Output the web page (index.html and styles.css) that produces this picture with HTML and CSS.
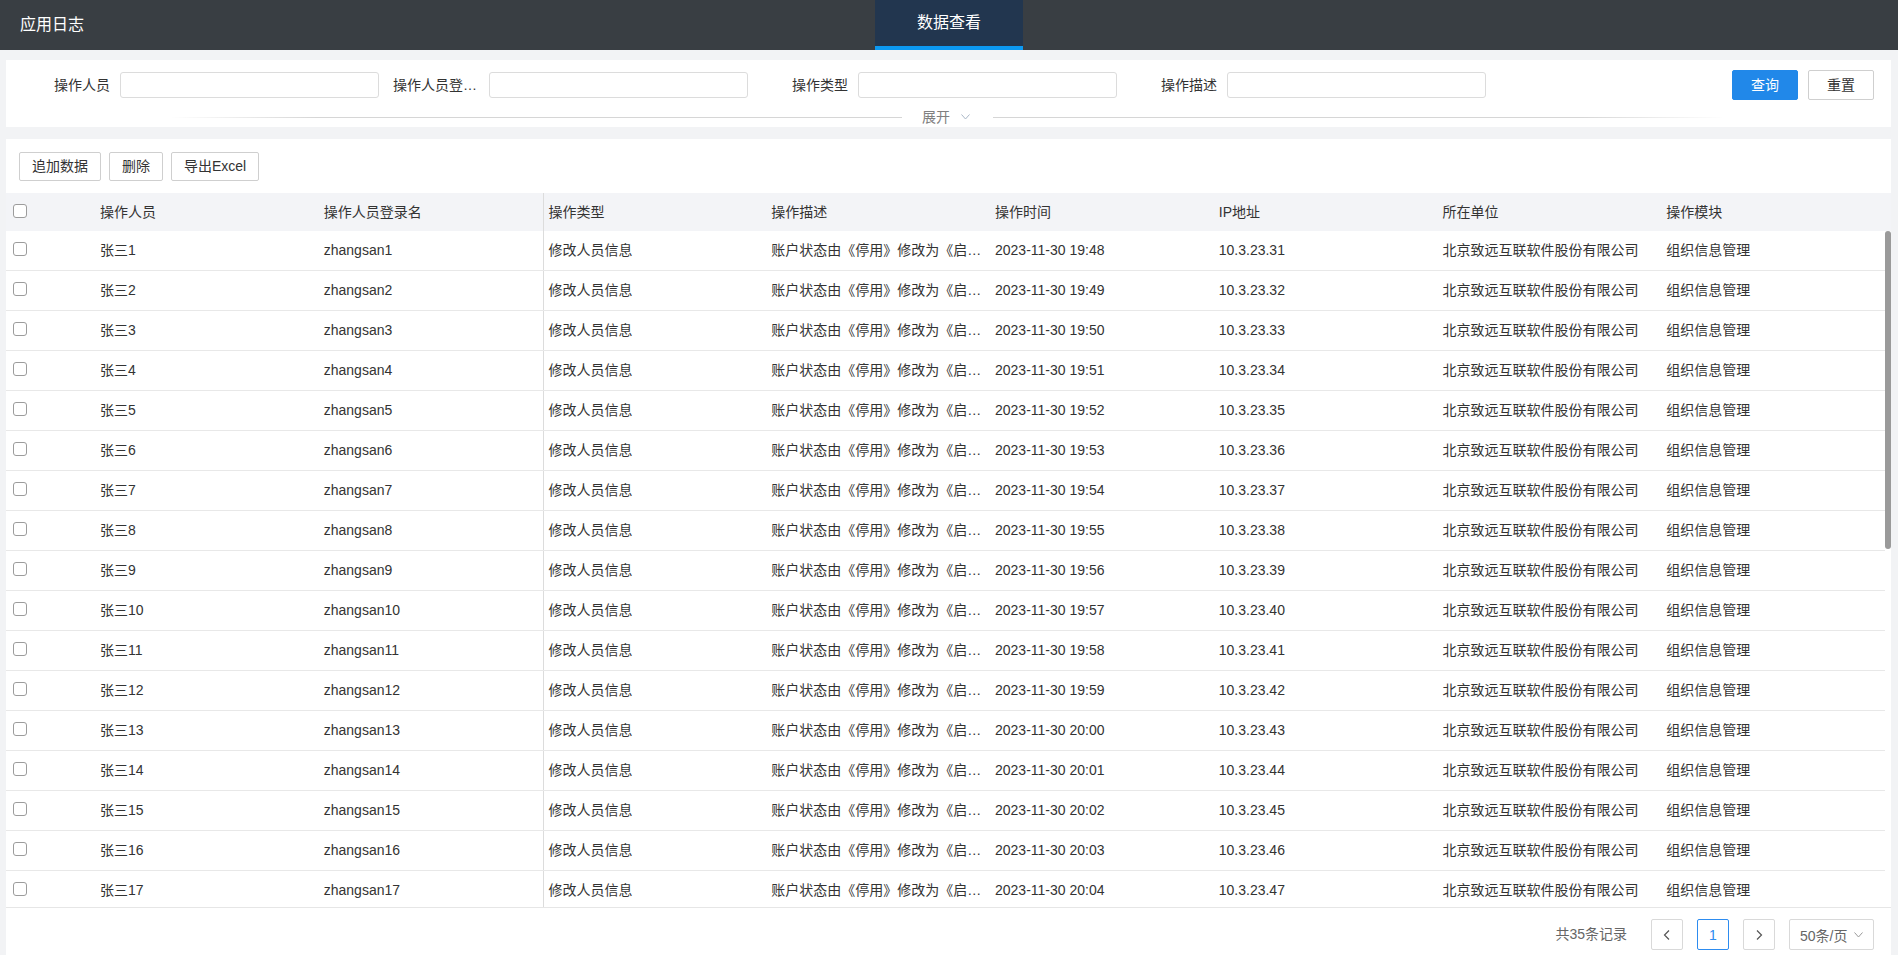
FILE: index.html
```html
<!DOCTYPE html>
<html lang="zh-CN">
<head>
    <meta charset="UTF-8">
    <meta name="viewport" content="width=device-width, initial-scale=1.0">
    <title>应用日志</title>
    <link rel="stylesheet" href="styles.css">
</head>
<body>
    <div class="topbar">
        <div class="app-title">应用日志</div>
        <div class="tab active">数据查看</div>
        <div></div>
    </div>

    <div class="page">
        <div class="search-panel">
            <div class="search-row">
                <div class="field">
                    <label class="field-label">操作人员</label>
                    <input class="field-input" type="text">
                </div>
                <div class="field">
                    <label class="field-label">操作人员登录名</label>
                    <input class="field-input" type="text">
                </div>
                <div class="field">
                    <label class="field-label">操作类型</label>
                    <input class="field-input" type="text">
                </div>
                <div class="field">
                    <label class="field-label">操作描述</label>
                    <input class="field-input" type="text">
                </div>
                <div class="search-actions">
                    <button class="btn btn-primary">查询</button>
                    <button class="btn">重置</button>
                </div>
            </div>
            <div class="expand-bar">
                <span class="expand-line left"></span>
                <span class="expand-text">展开</span>
                <svg class="expand-icon" width="9" height="6" viewBox="0 0 9 6"><polyline points="0.5,0.5 4.5,5 8.5,0.5" fill="none" stroke="#a9b7c6" stroke-width="1"/></svg>
                <span class="expand-line right"></span>
            </div>
        </div>

        <div class="table-panel">
            <div class="toolbar">
                <button class="tool-btn">追加数据</button>
                <button class="tool-btn">删除</button>
                <button class="tool-btn">导出Excel</button>
            </div>
            <div class="grid-head">
                <div class="cell cell-check"><span class="check"></span></div>
                <div class="cell">操作人员</div>
                <div class="cell">操作人员登录名</div>
                <div class="cell cell-fixed">操作类型</div>
                <div class="cell">操作描述</div>
                <div class="cell">操作时间</div>
                <div class="cell">IP地址</div>
                <div class="cell">所在单位</div>
                <div class="cell">操作模块</div>
            </div>
            <div class="grid-body">
                <div class="grid-rows" id="gridRows"></div>
                <div class="scrollbar"><div class="scroll-thumb"></div></div>
            </div>
            <div class="pager">
                <span class="pager-total">共35条记录</span>
                <span class="page-btn">
                    <svg width="12" height="12" viewBox="0 0 12 12"><polyline points="8,1.5 3.5,6 8,10.5" fill="none" stroke="#555" stroke-width="1.2"/></svg>
                </span>
                <span class="page-btn current">1</span>
                <span class="page-btn">
                    <svg width="12" height="12" viewBox="0 0 12 12"><polyline points="4,1.5 8.5,6 4,10.5" fill="none" stroke="#555" stroke-width="1.2"/></svg>
                </span>
                <span class="page-size">
                    <span>50条/页</span>
                    <svg width="9" height="6" viewBox="0 0 9 6"><polyline points="0.5,0.5 4.5,5 8.5,0.5" fill="none" stroke="#999" stroke-width="1"/></svg>
                </span>
            </div>
        </div>
    </div>

    <script>
        var gridRows = document.getElementById("gridRows");
        var html = "";

        // only the rows that fit in the visible part of the list
        for (var i = 1; i <= 17; i++) {
            var minutes = 48 + i - 1;
            var hour = 19 + Math.floor(minutes / 60);
            var min = minutes % 60;
            var time = "2023-11-30 " + hour + ":" + (min < 10 ? "0" + min : min);

            html += '<div class="grid-row">' +
                '<div class="cell cell-check"><span class="check"></span></div>' +
                '<div class="cell">张三' + i + '</div>' +
                '<div class="cell">zhangsan' + i + '</div>' +
                '<div class="cell cell-fixed">修改人员信息</div>' +
                '<div class="cell">账户状态由《停用》修改为《启用》</div>' +
                '<div class="cell">' + time + '</div>' +
                '<div class="cell">10.3.23.' + (30 + i) + '</div>' +
                '<div class="cell">北京致远互联软件股份有限公司</div>' +
                '<div class="cell">组织信息管理</div>' +
                '</div>';
        }

        gridRows.innerHTML = html;
    </script>
</body>
</html>
```

FILE: styles.css
```css
* {
    box-sizing: border-box;
}

html,
body {
    height: 100%;
}

body {
    margin: 0;
    font-family: "Liberation Sans", "Noto Sans CJK SC", sans-serif;
    font-size: 14px;
    color: #333;
    background-color: #f2f3f5;
    display: flex;
    flex-direction: column;
    overflow: hidden;
}

/* top bar */
.topbar {
    flex: none;
    height: 50px;
    display: grid;
    grid-template-columns: 1fr auto 1fr;
    background-color: #393e43;
    color: #fff;
}

.app-title {
    padding-left: 20px;
    font-size: 16px;
    line-height: 50px;
}

.tab {
    padding: 0 42px;
    font-size: 16px;
    line-height: 46px;
}

.tab.active {
    background-color: #22364f;
    border-bottom: 4px solid #0c99f2;
}

.page {
    flex: 1;
    min-height: 0;
    display: flex;
    flex-direction: column;
    gap: 12px;
    padding: 10px 7px 0 6px;
}

/* search */
.search-panel {
    flex: none;
    height: 67px;
    background-color: #fff;
    padding: 10px 17px 0 4px;
}

.search-row {
    display: flex;
    align-items: center;
    height: 30px;
}

.field {
    display: flex;
    align-items: center;
    width: 369px;
}

.field-label {
    width: 110px;
    padding: 0 10px 0 14px;
    text-align: right;
    white-space: nowrap;
    overflow: hidden;
    text-overflow: ellipsis;
    line-height: 20px;
}

.field-input {
    width: 259px;
    height: 26px;
    padding: 0 8px;
    border: 1px solid #dcdcdc;
    border-radius: 3px;
    outline: none;
    font: inherit;
}

.search-actions {
    margin-left: auto;
    display: flex;
    gap: 10px;
}

.btn {
    height: 30px;
    padding: 0 18px;
    border: 1px solid #cfcfcf;
    border-radius: 2px;
    background-color: #fff;
    color: #333;
    font-family: inherit;
    font-size: 14px;
    line-height: 28px;
    cursor: pointer;
}

.btn-primary {
    background-color: #2188e9;
    border-color: #2188e9;
    color: #fff;
}

.expand-bar {
    display: flex;
    align-items: center;
    height: 20px;
    margin: 7px -17px 0 -4px;
    padding: 0 166px 0 164px;
}

.expand-line {
    flex: 1;
    height: 1px;
}

.expand-line.left {
    background: linear-gradient(to right, rgba(216, 216, 216, 0), #d6d6d6 20%);
}

.expand-line.right {
    background: linear-gradient(to left, rgba(216, 216, 216, 0), #d6d6d6 20%);
}

.expand-text {
    margin-left: 20px;
    color: #808080;
    line-height: 20px;
}

.expand-icon {
    margin: 0 23px 0 11px;
}

/* table */
.table-panel {
    flex: 1;
    min-height: 0;
    display: flex;
    flex-direction: column;
    background-color: #fff;
}

.toolbar {
    flex: none;
    display: flex;
    gap: 8px;
    padding: 13px 13px 12px;
}

.tool-btn {
    height: 29px;
    padding: 0 12px;
    border: 1px solid #cfcfcf;
    border-radius: 2px;
    background-color: #fff;
    color: #333;
    font-family: inherit;
    font-size: 14px;
    line-height: 27px;
    cursor: pointer;
}

.grid-head,
.grid-row {
    display: grid;
    grid-template-columns: 89px repeat(8, 1fr);
}

.grid-head {
    flex: none;
    height: 38px;
    padding-right: 6px;
    background-color: #f3f4f7;
    line-height: 38px;
}

.grid-body {
    flex: 1;
    min-height: 0;
    display: flex;
    border-bottom: 1px solid #e6e6e6;
}

.grid-rows {
    flex: 1;
    min-width: 0;
    overflow: hidden;
}

.scrollbar {
    flex: none;
    width: 6px;
}

.scroll-thumb {
    height: 318px;
    border-radius: 3px;
    background-color: #9a9a9a;
}

.grid-row {
    height: 40px;
    border-bottom: 1px solid #e8e8e8;
    line-height: 39px;
}

.cell {
    min-width: 0;
    padding: 0 5px;
    white-space: nowrap;
    overflow: hidden;
    text-overflow: ellipsis;
}

.cell-fixed {
    border-left: 1px solid #dcdcdc;
}

.cell-check {
    display: flex;
    align-items: center;
    padding-left: 7px;
}

.check {
    width: 14px;
    height: 14px;
    margin-top: -3px;
    border: 1px solid #9c9c9c;
    border-radius: 3px;
    background-color: #fff;
}

/* pager */
.pager {
    flex: none;
    height: 47px;
    display: flex;
    justify-content: flex-end;
    align-items: flex-start;
    gap: 14px;
    padding: 11px 17px 0;
}

.pager-total {
    margin-right: 10px;
    color: #666;
    line-height: 31px;
}

.page-btn {
    width: 32px;
    height: 31px;
    display: flex;
    align-items: center;
    justify-content: center;
    border: 1px solid #d9d9d9;
    border-radius: 2px;
    color: #666;
}

.page-btn.current {
    border-color: #2d8cf0;
    color: #2d8cf0;
}

.page-size {
    width: 85px;
    height: 31px;
    display: flex;
    align-items: center;
    gap: 7px;
    padding-left: 10px;
    border: 1px solid #d9d9d9;
    border-radius: 2px;
    color: #666;
}
```
